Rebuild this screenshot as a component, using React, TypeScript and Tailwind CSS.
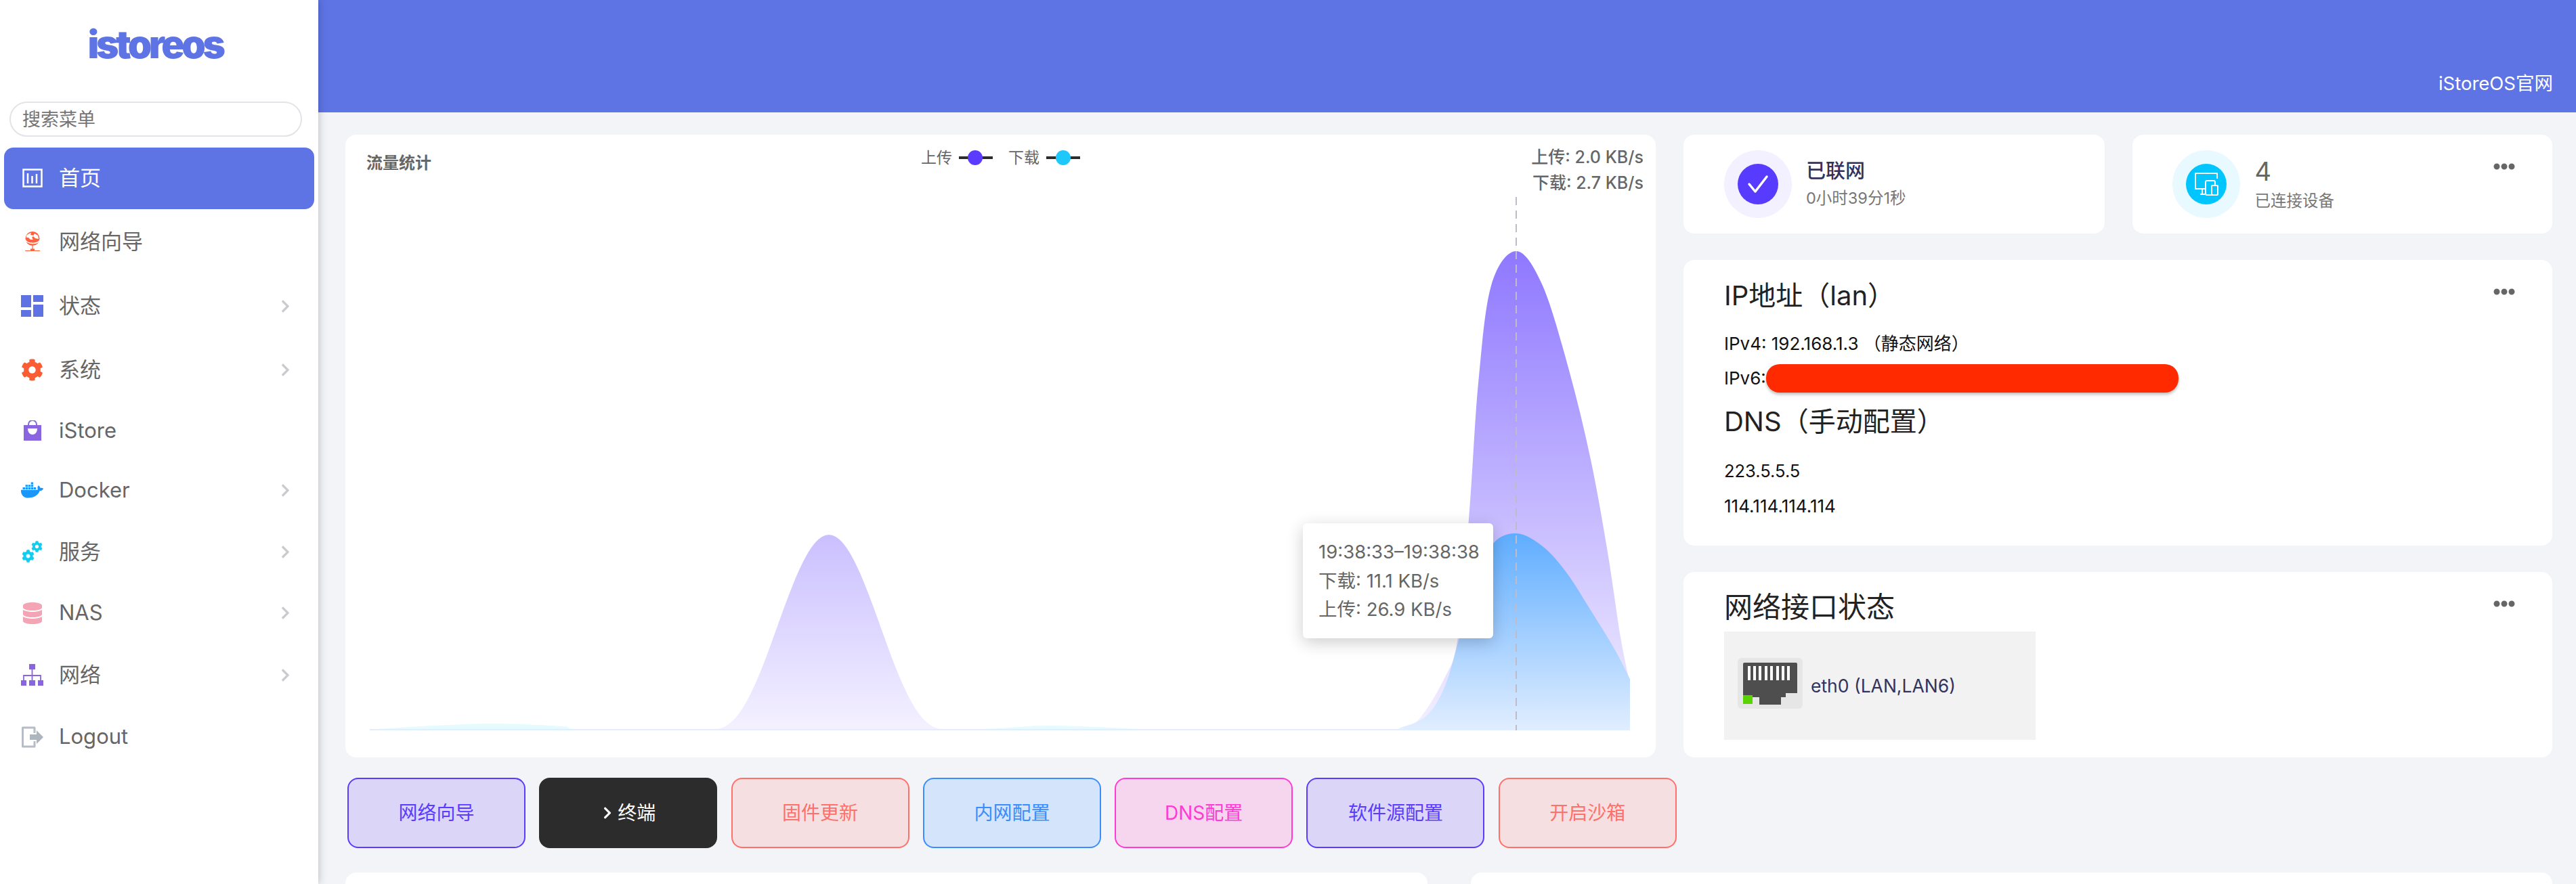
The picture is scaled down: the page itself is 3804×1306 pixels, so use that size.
import React from "react";
import { FaChevronRight, FaCog, FaDatabase, FaDocker, FaEllipsisH } from "react-icons/fa";

type Pt = [number, number];

// catmull-rom through the points, good enough for the traffic curves
const smooth = (pts: Pt[]) => {
  let d = `M${pts[0][0]} ${pts[0][1]}`;
  for (let i = 0; i < pts.length - 1; i++) {
    const p0 = pts[i - 1] || pts[i];
    const p1 = pts[i];
    const p2 = pts[i + 1];
    const p3 = pts[i + 2] || p2;
    const c1x = p1[0] + (p2[0] - p0[0]) / 6;
    const c1y = p1[1] + (p2[1] - p0[1]) / 6;
    const c2x = p2[0] - (p3[0] - p1[0]) / 6;
    const c2y = p2[1] - (p3[1] - p1[1]) / 6;
    d += ` C${c1x} ${c1y} ${c2x} ${c2y} ${p2[0]} ${p2[1]}`;
  }
  return d;
};

const BASE = 1079;

// small upload bell around x=1224
const bell: Pt[] = Array.from({ length: 23 }, (_, i) => {
  const d = -165 + i * 15;
  const c = Math.cos((Math.PI * d) / 350);
  return [1224 + d, 1078 - 288 * Math.pow(c, 2.5)] as Pt;
});

const uploadPts: Pt[] = [
  [546, 1078], [1040, 1078], ...bell, [1410, 1078], [2050, 1078], [2090, 1068],
  [2132, 1004], [2153, 941], [2170, 754], [2183, 566], [2202, 422], [2239, 371], [2278, 422],
  [2317, 547], [2349, 679], [2374, 816], [2393, 941], [2407, 1010],
];

const downloadPts: Pt[] = [
  [546, 1077], [2040, 1077], [2065, 1076], [2107, 1057], [2134, 1013], [2155, 943], [2180, 860],
  [2205, 803], [2240, 788], [2279, 808], [2314, 847], [2348, 900], [2383, 957], [2407, 1003],
];

const bumpPts: Pt[] = [
  [546, 1078], [640, 1072], [735, 1069], [830, 1073], [900, 1078], [1400, 1078], [1550, 1072],
  [1700, 1078],
];

const closed = (pts: Pt[]) => `${smooth(pts)} L2407 ${BASE} L546 ${BASE} Z`;

const TrafficChart = () => (
  <svg width="1935" height="800" viewBox="510 291 1935 800" className="block">
    <defs>
      <linearGradient id="up" gradientUnits="userSpaceOnUse" x1="0" y1="371" x2="0" y2="1079">
        <stop offset="0" stopColor="#8f78ff" />
        <stop offset="1" stopColor="#f4f1ff" />
      </linearGradient>
      <linearGradient id="down" gradientUnits="userSpaceOnUse" x1="0" y1="788" x2="0" y2="1079">
        <stop offset="0" stopColor="#5fadff" />
        <stop offset="1" stopColor="#e1eeff" />
      </linearGradient>
    </defs>
    <path d={closed(bumpPts)} fill="#e6fbff" />
    <path d={closed(uploadPts)} fill="url(#up)" />
    <path d={closed(downloadPts)} fill="url(#down)" />
    <line x1="2239" y1="291" x2="2239" y2={BASE} stroke="#bfbcc8" strokeWidth="2" strokeDasharray="12 8" />
  </svg>
);

const HomeIcon = () => (
  <svg width="30" height="30" viewBox="0 0 30 30" fill="none" stroke="#fff">
    <rect x="1.5" y="1.5" width="27" height="25" strokeWidth="2.5" />
    <path d="M8 7v15M14.5 11v11M21 8v14" strokeWidth="2.5" />
  </svg>
);

const GlobeIcon = () => (
  <svg width="24" height="30" viewBox="0 0 24 30">
    <circle cx="12" cy="10.5" r="10.5" fill="#fb6340" />
    <path d="M3 6c3-3 6-4 7-4l-1 3 5 1-3 3 2 3-4 0-3-3-3 0z" fill="#fff" />
    <path d="M15 3l5 3 1 5-5-1-3-3z" fill="#fff" />
    <path d="M1 12c3 6 17 8 22 1" fill="none" stroke="#fff" strokeWidth="1.6" />
    <path d="M12 21v6M1 28.5h22" stroke="#fb6340" strokeWidth="1.2" />
    <rect x="9" y="25.5" width="6" height="3" fill="#fb6340" />
  </svg>
);

const DashIcon = () => (
  <svg width="33" height="32" viewBox="0 0 33 32" fill="#5e72e4">
    <rect x="0" y="0" width="15" height="18" />
    <rect x="0" y="22" width="15" height="10" />
    <rect x="18" y="0" width="15" height="10" />
    <rect x="18" y="14" width="15" height="18" />
  </svg>
);

const StoreIcon = () => (
  <svg width="28" height="30" viewBox="0 0 28 30">
    <path d="M8 8V6a6 6 0 0 1 12 0v2" fill="none" stroke="#8965e0" strokeWidth="2" />
    <rect x="1" y="7" width="26" height="23" fill="#8965e0" />
    <path d="M7 12c0 12 14 12 14 0z" fill="#fff" />
  </svg>
);

const GearsIcon = () => (
  <span className="relative block h-[32px] w-[31px]">
    <FaCog size={19} color="#11cdef" className="absolute bottom-0 left-0" />
    <FaCog size={17} color="#11cdef" className="absolute top-0 right-0" />
  </span>
);

const NetIcon = () => (
  <svg width="33" height="32" viewBox="0 0 33 32">
    <path d="M16.5 8v16M4 24v-7h25v7" fill="none" stroke="#8965e0" strokeWidth="1.8" />
    <g fill="#8965e0">
      <rect x="12" y="0" width="9" height="8" />
      <rect x="0" y="24" width="8" height="8" />
      <rect x="12" y="24" width="9" height="8" />
      <rect x="25" y="24" width="8" height="8" />
    </g>
  </svg>
);

const LogoutIcon = () => (
  <svg width="33" height="32" viewBox="0 0 33 32" fill="none">
    <path d="M20 10V2H2.5v28H20v-8" stroke="#b8bcc6" strokeWidth="3" strokeLinejoin="round" />
    <path d="M13 12h10V6l10 10-10 10v-6H13z" fill="#adb5bd" />
  </svg>
);

const menu = [
  { name: "首页", icon: <HomeIcon />, h: "h-[91px]", active: true },
  { name: "网络向导", icon: <GlobeIcon />, h: "h-[96px]" },
  { name: "状态", icon: <DashIcon />, h: "h-[94px]", sub: true },
  { name: "系统", icon: <FaCog size={33} color="#fb5c34" />, h: "h-[94px]", sub: true },
  { name: "iStore", icon: <StoreIcon />, h: "h-[86px]" },
  { name: "Docker", icon: <FaDocker size={34} color="#1b96fb" />, h: "h-[90px]", sub: true },
  { name: "服务", icon: <GearsIcon />, h: "h-[92px]", sub: true },
  { name: "NAS", icon: <FaDatabase size={32} color="#f3a4b5" />, h: "h-[89px]", sub: true },
  { name: "网络", icon: <NetIcon />, h: "h-[94px]", sub: true },
  { name: "Logout", icon: <LogoutIcon />, h: "h-[89px]" },
];

const Sidebar = () => (
  <aside className="relative z-10 w-[470px] shrink-0 bg-white shadow-[0_0_12px_rgba(0,0,0,0.25)]">
    <div className="flex h-[150px] justify-center pt-[31px] pr-[12px]">
      <span className="text-[57px] leading-[70px] font-black tracking-[-4.5px] text-[#5e74e4]">istoreos</span>
    </div>
    <div className="px-[14px]">
      <input
        placeholder="搜索菜单"
        className="h-[52px] w-[432px] rounded-full border-2 border-[#e1e4e8] px-[17px] text-[27px] outline-none placeholder:text-[#757575]"
      />
    </div>
    <nav className="mt-[16px] px-[6px]">
      {menu.map((item) => (
        <div
          key={item.name}
          className={`flex items-center rounded-[14px] pr-[32px] pl-[25px] text-[31px] ${item.h} ${
            item.active ? "bg-[#5e74e4] text-white" : "text-[#666]"
          }`}
        >
          <span className="flex w-[33px] shrink-0 justify-center">{item.icon}</span>
          <span className="ml-[23px] flex-1">{item.name}</span>
          {item.sub && <FaChevronRight size={21} color="#cbcbcf" />}
        </div>
      ))}
    </nav>
  </aside>
);

const Dots = () => (
  <span className="absolute top-[31px] right-[55px] text-[#666]">
    <FaEllipsisH size={32} />
  </span>
);

const quick = [
  { label: "网络向导", cls: "bg-[#dbd6f8] border-[#5a3bff] text-[#5a3bff]" },
  { label: "终端", cls: "bg-[#2c2c2c] border-[#2c2c2c] text-white", chevron: true },
  { label: "固件更新", cls: "bg-[#f6dfe1] border-[#ff706a] text-[#ff706a]" },
  { label: "内网配置", cls: "bg-[#d4e4fa] border-[#3a8dff] text-[#3a8dff]" },
  { label: "DNS配置", cls: "bg-[#f6d6ef] border-[#ff3bd4] text-[#ff3bd4]" },
  { label: "软件源配置", cls: "bg-[#dbd6f8] border-[#5a3bff] text-[#5a3bff]" },
  { label: "开启沙箱", cls: "bg-[#f6dfe1] border-[#ff706a] text-[#ff706a]" },
];

const App = () => {
  return (
    <div className="flex h-[1306px] overflow-hidden bg-[#f3f4f7] font-['Inter','Noto_Sans_CJK_SC',sans-serif]">
      <Sidebar />

      <main className="flex-1">
        <header className="flex h-[166px] items-end justify-end bg-[#5e74e4] pr-[34px] pb-[23px] text-[27.5px] leading-[40px] text-white">
          iStoreOS官网
        </header>

        <div className="pt-[33px] pr-[35px] pl-[40px]">
          <div className="flex h-[920px] gap-[41px]">
            {/* Traffic */}
            <section className="relative w-[1935px] shrink-0 rounded-[16px] bg-white">
              <div className="grid h-[92px] grid-cols-3 text-[#666]">
                <div className="pt-[23px] pl-[31px] text-[24px] leading-[38px] font-semibold">流量统计</div>
                <div className="flex items-start justify-center gap-[10px] pt-[15px] text-[23px] leading-[38px]">
                  <span>上传</span>
                  <span className="relative mt-[17px] mr-[13px] h-[4px] w-[50px] bg-[#2c2c2c]">
                    <span className="absolute top-[-9px] left-[13px] h-[22px] w-[22px] rounded-full bg-[#5a3bff]" />
                  </span>
                  <span>下载</span>
                  <span className="relative mt-[17px] h-[4px] w-[50px] bg-[#2c2c2c]">
                    <span className="absolute top-[-9px] left-[14px] h-[22px] w-[22px] rounded-full bg-[#1fc8fb]" />
                  </span>
                </div>
                <div className="pt-[14px] pr-[18px] text-right text-[25px] leading-[38px] font-medium">
                  <div>上传: 2.0 KB/s</div>
                  <div>下载: 2.7 KB/s</div>
                </div>
              </div>
              <TrafficChart />
              <div className="absolute top-[574px] left-[1414px] h-[170px] w-[281px] rounded-[6px] bg-white pt-[21px] pl-[23px] text-[27.5px] leading-[42.5px] whitespace-nowrap text-[#666] shadow-[0_6px_24px_rgba(0,0,0,0.2)]">
                <div>19:38:33–19:38:38</div>
                <div>下载: 11.1 KB/s</div>
                <div>上传: 26.9 KB/s</div>
              </div>
            </section>

            {/* Right column */}
            <div className="flex flex-1 flex-col gap-[39px]">
              <div className="flex h-[146px] gap-[41px]">
                <div className="flex flex-1 items-center gap-[21px] rounded-[16px] bg-white pl-[60px]">
                  <span className="flex h-[100px] w-[100px] items-center justify-center rounded-full bg-[#f3f0ff]">
                    <span className="flex h-[60px] w-[60px] items-center justify-center rounded-full bg-[#573cff]">
                      <svg width="36" height="30" viewBox="0 0 36 30" fill="none">
                        <path d="M5 15l9 11L31 4" stroke="#fff" strokeWidth="3.5" strokeLinecap="round" strokeLinejoin="round" />
                      </svg>
                    </span>
                  </span>
                  <div>
                    <div className="text-[29px] leading-[42px] font-medium text-[#32325d]">已联网</div>
                    <div className="text-[23.5px] leading-[38px] text-[#777]">0小时39分1秒</div>
                  </div>
                </div>
                <div className="relative flex flex-1 items-center gap-[22px] rounded-[16px] bg-white pl-[59px]">
                  <span className="flex h-[100px] w-[100px] items-center justify-center rounded-full bg-[#e8f9ff]">
                    <span className="flex h-[60px] w-[60px] items-center justify-center rounded-full bg-[#00c5ff]">
                      <svg width="36" height="36" viewBox="0 0 36 36" fill="none" stroke="#fff" strokeWidth="2">
                        <path d="M16 25H2V2h32v8" />
                        <path d="M9 33h7M12 25v8" />
                        <rect x="17" y="13" width="14" height="21" rx="2" />
                        <rect x="26" y="20" width="9" height="14" rx="1" fill="#00c5ff" />
                      </svg>
                    </span>
                  </span>
                  <div>
                    <div className="text-[38px] leading-[50px] text-[#666]">4</div>
                    <div className="text-[23.5px] leading-[38px] text-[#777]">已连接设备</div>
                  </div>
                  <Dots />
                </div>
              </div>

              <div className="relative h-[422px] rounded-[16px] bg-white pt-[27px] pl-[60px]">
                <div className="text-[40px] leading-[52px] text-[#222]">IP地址（lan）</div>
                <div className="mt-[24px] text-[26px] leading-[42px] text-[#111]">IPv4: 192.168.1.3 （静态网络）</div>
                <div className="mt-[9px] flex items-center text-[26px] leading-[42px] text-[#111]">
                  <span className="w-[62px]">IPv6:</span>
                  <span className="h-[42px] w-[609px] rounded-[20px] bg-[#ff2a00] shadow-[0_3px_4px_rgba(0,0,0,0.25)]" />
                </div>
                <div className="mt-[17px] text-[40px] leading-[52px] text-[#222]">DNS（手动配置）</div>
                <div className="mt-[26px] text-[25.5px] leading-[42px] text-[#111]">223.5.5.5</div>
                <div className="mt-[10px] text-[26px] leading-[42px] text-[#111]">114.114.114.114</div>
                <Dots />
              </div>

              <div className="relative h-[274px] rounded-[16px] bg-white pt-[26px] pl-[60px]">
                <div className="text-[42px] leading-[52px] text-[#222]">网络接口状态</div>
                <div className="mt-[10px] flex h-[160px] w-[460px] items-start bg-[#f2f2f2] pt-[39px] pl-[20px]">
                  <svg width="96" height="75" viewBox="0 0 96 75" className="shrink-0">
                    <rect width="96" height="75" rx="6" fill="#e6e6e6" />
                    <path d="M8 9q0-2 2-2h76q2 0 2 2v43H71v6H64v11H32V58H8z" fill="#4e4e4e" />
                    <path d="M17 12v21M25 12v21M33 12v21M42 12v21M50 12v21M59 12v21M67 12v21M75 12v21" stroke="#fff" strokeWidth="4" />
                    <rect x="8" y="55" width="14" height="13" fill="#5ad400" />
                  </svg>
                  <span className="mt-[22px] ml-[12px] text-[26.5px] leading-[38px] text-[#32325d]">eth0 (LAN,LAN6)</span>
                </div>
                <Dots />
              </div>
            </div>
          </div>

          <div className="mt-[30px] flex gap-[20.3px] pl-[3px]">
            {quick.map((b) => (
              <button
                key={b.label}
                className={`flex h-[104px] w-[263px] items-center justify-center gap-[5px] rounded-[16px] border-2 text-[28px] ${b.cls}`}
              >
                {b.chevron && <FaChevronRight size={20} />}
                {b.label}
              </button>
            ))}
          </div>

          <div className="mt-[36px] flex gap-[64px]">
            <div className="h-[200px] flex-1 rounded-[16px] bg-white" />
            <div className="h-[200px] flex-1 rounded-[16px] bg-white" />
          </div>
        </div>
      </main>
    </div>
  );
};

export default App;
